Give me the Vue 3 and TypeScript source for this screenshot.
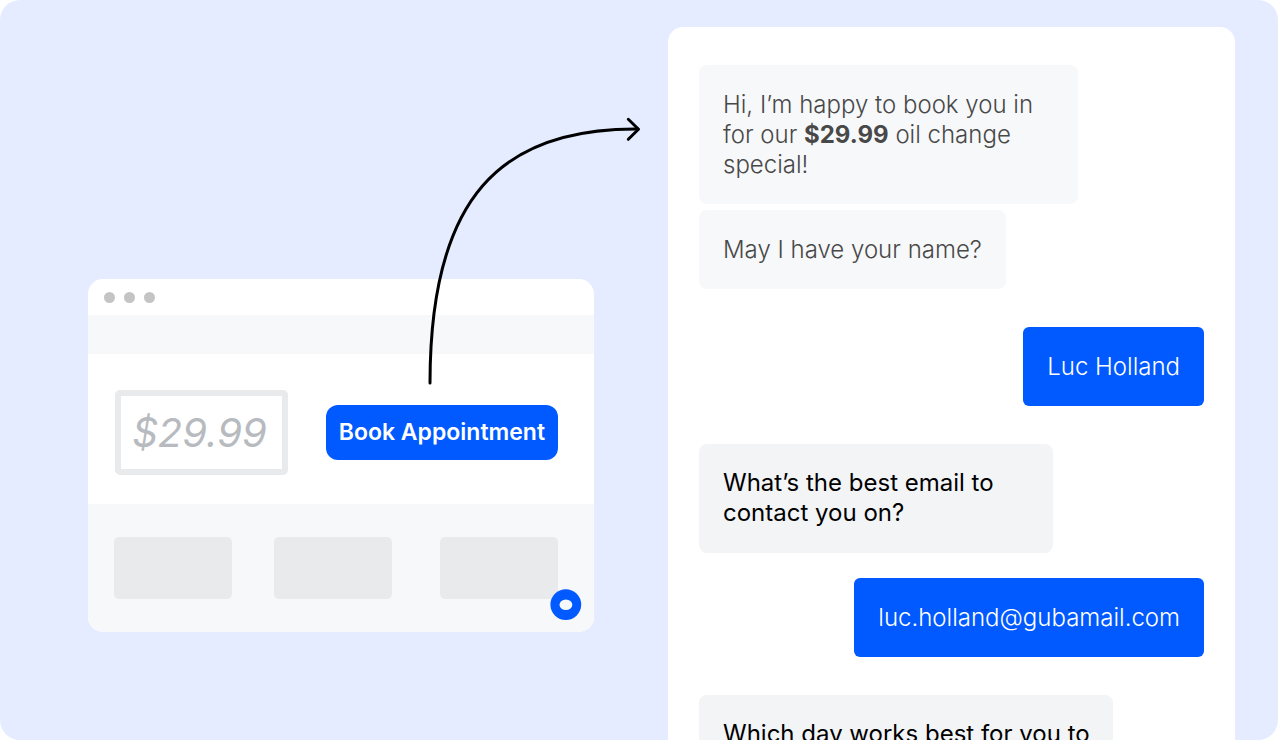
<script setup lang="ts">
interface Part {
  text: string
  strong?: boolean
}

interface Message {
  id: number
  from: 'agent' | 'visitor'
  tone?: 'faded'
  width?: 'narrow' | 'broad'
  spacing: 'none' | 'tight' | 'medium' | 'wide'
  parts: Part[]
}

const messages: Message[] = [
  {
    id: 1,
    from: 'agent',
    tone: 'faded',
    spacing: 'none',
    parts: [
      { text: 'Hi, I’m happy to book you in for our ' },
      { text: '$29.99', strong: true },
      { text: ' oil change special!' },
    ],
  },
  { id: 2, from: 'agent', tone: 'faded', spacing: 'tight', parts: [{ text: 'May I have your name?' }] },
  { id: 3, from: 'visitor', spacing: 'wide', parts: [{ text: 'Luc Holland' }] },
  {
    id: 4,
    from: 'agent',
    width: 'narrow',
    spacing: 'wide',
    parts: [{ text: 'What’s the best email to contact you on?' }],
  },
  { id: 5, from: 'visitor', spacing: 'medium', parts: [{ text: 'luc.holland@gubamail.com' }] },
  {
    id: 6,
    from: 'agent',
    width: 'broad',
    spacing: 'wide',
    parts: [{ text: 'Which day works best for you to come in?' }],
  },
]
</script>

<template>
  <main class="stage">
    <section class="site" aria-label="Website">
      <div class="browser">
        <div class="titlebar">
          <span class="dot"></span>
          <span class="dot"></span>
          <span class="dot"></span>
        </div>
        <div class="navband"></div>
        <div class="hero">
          <p class="price">$29.99</p>
          <button type="button" class="book">Book Appointment</button>
        </div>
        <div class="tiles">
          <span class="tile"></span>
          <span class="tile"></span>
          <span class="tile"></span>
        </div>
        <button type="button" class="launcher" aria-label="Open chat">
          <svg viewBox="0 0 31 31" width="31" height="31" aria-hidden="true">
            <circle cx="15.8" cy="15.6" r="15.4" fill="#005aff" />
            <ellipse cx="15.9" cy="15.8" rx="6.4" ry="5.3" fill="#f7f8fa" />
          </svg>
        </button>
      </div>
      <svg class="arrow" viewBox="425 115 220 275" width="220" height="275" fill="none" aria-hidden="true">
        <path d="M430 383 C430 198 500 128 638 129" />
        <path d="M628.3 119.3 L638.5 129.3 L628.3 139.3" />
      </svg>
    </section>

    <section class="chat" aria-label="Chat">
      <ol class="thread">
        <li
          v-for="message in messages"
          :key="message.id"
          class="bubble"
          :class="[message.from, message.tone, message.width, message.spacing]"
        >
          <template v-for="(part, i) in message.parts" :key="i"
            ><strong v-if="part.strong">{{ part.text }}</strong
            ><template v-else>{{ part.text }}</template></template
          >
        </li>
      </ol>
    </section>
  </main>
</template>

<style>
body {
  margin: 0;
  background: #fff;
}
</style>

<style scoped>
.stage {
  box-sizing: border-box;
  display: grid;
  grid-template-columns: 506fr 567fr;
  column-gap: 74px;
  height: 100vh;
  padding: 0 43px 0 88px;
  overflow: hidden;
  border-radius: 20px;
  background: #e5ecff;
  font-family: Inter, "Liberation Sans", sans-serif;
}

.site {
  position: relative;
  align-self: start;
  margin-top: 279px;
}

.browser {
  position: relative;
  overflow: hidden;
  border-radius: 15px;
  background: #fff;
}

.titlebar {
  display: flex;
  align-items: center;
  gap: 9px;
  height: 36px;
  padding-left: 16px;
}

.dot {
  width: 11px;
  height: 11px;
  border-radius: 50%;
  background: #c4c4c4;
}

.navband {
  height: 39px;
  background: #f7f8fa;
}

.hero {
  box-sizing: border-box;
  display: flex;
  align-items: center;
  justify-content: space-between;
  height: 150px;
  padding: 7px 36px 0 27px;
}

.price {
  box-sizing: border-box;
  width: 173px;
  margin: 0;
  padding: 10px 4px 10px 0;
  border: 6px solid #e9eaeb;
  border-radius: 5px;
  color: #b7bbc0;
  font-size: 40px;
  font-style: italic;
  font-weight: 400;
  line-height: 53px;
  text-align: center;
}

.book {
  height: 55px;
  padding: 0 13px 2px;
  border: 0;
  border-radius: 12px;
  background: #005aff;
  color: #fff;
  font-family: inherit;
  font-size: 23px;
  font-weight: 600;
  line-height: 30px;
  white-space: nowrap;
}

.tiles {
  display: flex;
  gap: 42px;
  height: 62px;
  padding: 33px 36px 33px 26px;
  background: #f7f8fa;
}

.tile {
  width: 118px;
  border-radius: 5px;
  background: #e9eaeb;
}

.tile:last-child {
  margin-left: auto;
}

.launcher {
  position: absolute;
  right: 13px;
  bottom: 12px;
  width: 31px;
  height: 31px;
  padding: 0;
  border: 0;
  background: none;
}

.launcher svg {
  display: block;
  overflow: visible;
}

.arrow {
  position: absolute;
  top: -164px;
  left: 337px;
  stroke: #000;
  stroke-width: 3;
  stroke-linecap: round;
  stroke-linejoin: round;
  pointer-events: none;
}

.chat {
  margin-top: 27px;
  padding: 38px 31px 0;
  border-radius: 15px 15px 0 0;
  background: #fff;
}

.thread {
  display: flex;
  flex-direction: column;
  align-items: flex-start;
  margin: 0;
  padding: 0;
  list-style: none;
}

.bubble {
  box-sizing: border-box;
  max-width: 75%;
  padding: 24px 16px 25px 24px;
  border-radius: 8px;
  background: #f3f4f6;
  color: #000;
  font-size: 24px;
  font-weight: 400;
  line-height: 30px;
}

.bubble.faded {
  padding: 25px 24px 24px;
  background: #f7f8fa;
  color: #484848;
  font-weight: 300;
}

.bubble.visitor {
  align-self: flex-end;
  padding: 25px 24px 24px;
  border-radius: 6px;
  background: #005aff;
  color: #fff;
  font-weight: 300;
}

.bubble.narrow {
  max-width: 70%;
}

.bubble.broad {
  max-width: 82%;
}

.bubble strong {
  font-weight: 700;
}

.tight {
  margin-top: 6px;
}

.medium {
  margin-top: 25px;
}

.wide {
  margin-top: 38px;
}
</style>
